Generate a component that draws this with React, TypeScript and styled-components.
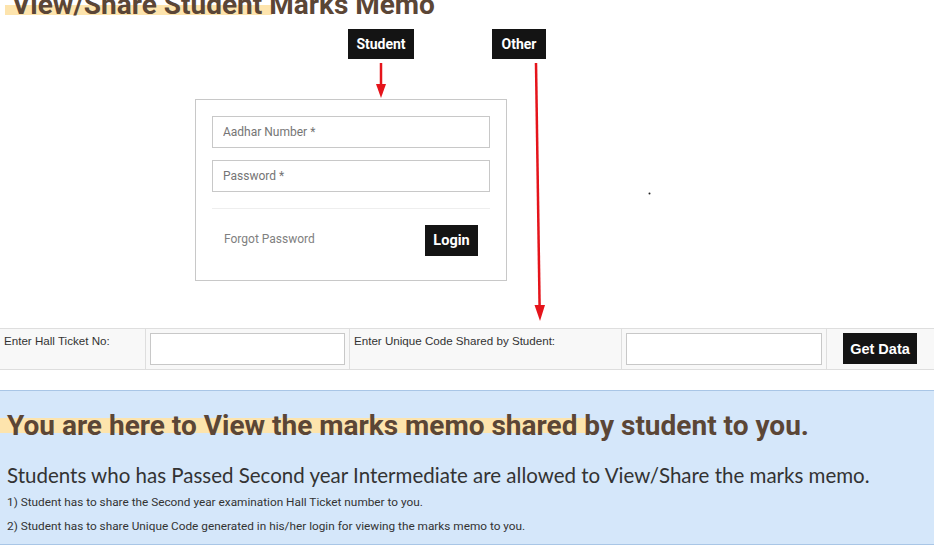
import React from "react";
import styled, { createGlobalStyle } from "styled-components";

const GlobalStyle = createGlobalStyle`
  html, body {
    margin: 0;
    padding: 0;
    background: #fff;
    overflow: hidden;
  }
  * {
    box-sizing: border-box;
  }
`;

const palette = {
  brown: "#5b4636",
  highlight: "#fde4ad",
  red: "#e5141b",
  black: "#141414",
  gray_cc: "#c8c8c8",
  gray_dd: "#dedede",
  gray_88: "#8a8a8a",
  blue_bg: "#d5e7fa",
  blue_line: "#a9c6e6",
};

const Page = styled.div`
  position: relative;
  width: 934px;
  height: 547px;
  overflow: hidden;
  font-family: Roboto, "Liberation Sans", sans-serif;
`;

const PageTitle = styled.h1`
  margin: -11px 0 0 0;
  padding-left: 12px;
  height: 31px;
  font-family: Roboto, "Liberation Sans", sans-serif;
  font-size: 28px;
  line-height: 31px;
  font-weight: 700;
  color: ${palette.brown};
  background-image: linear-gradient(${palette.highlight}, ${palette.highlight});
  background-repeat: no-repeat;
  background-size: 267px 10px;
  background-position: 5px 16px;
`;

const Stage = styled.div`
  padding-top: 9px;
`;

const TabLabels = styled.div`
  display: flex;
  gap: 78px;
  padding-left: 348px;
`;

const TabLabel = styled.div<{ width: number }>`
  width: ${({ width }) => width}px;
  height: 30px;
  background: ${palette.black};
  color: #fff;
  font-size: 14px;
  font-weight: 700;
  display: flex;
  align-items: center;
  justify-content: center;
`;

const LoginBox = styled.div`
  margin: 40px 0 0 195px;
  width: 312px;
  height: 182px;
  border: 1px solid ${palette.gray_cc};
  padding: 16px 16px 0 16px;
`;

const TextInput = styled.input`
  display: block;
  width: 100%;
  height: 32px;
  border: 1px solid ${palette.gray_cc};
  padding: 0 10px;
  font-family: Roboto, "Liberation Sans", sans-serif;
  font-size: 12px;
  color: #333;
  outline: none;
  & + & {
    margin-top: 12px;
  }
  ::placeholder {
    color: ${palette.gray_88};
  }
`;

const LoginFooter = styled.div`
  margin-top: 16px;
  border-top: 1px solid #eeeeee;
  padding: 16px 12px 0 12px;
  display: flex;
  align-items: center;
  justify-content: space-between;
  span {
    font-size: 12px;
    color: #808080;
    margin-bottom: 3px;
  }
`;

const DarkButton = styled.button<{ w: number }>`
  width: ${({ w }) => w}px;
  height: 31px;
  border: none;
  padding: 0;
  background: ${palette.black};
  color: #fff;
  font-family: ${({ w }) =>
    w > 60 ? `"Liberation Sans", Arial, sans-serif` : `Roboto, "Liberation Sans", sans-serif`};
  font-size: 14.5px;
  font-weight: 700;
  cursor: pointer;
`;

const TicketRow = styled.div`
  margin-top: 47px;
  display: grid;
  grid-template-columns: 145px 204px 272px 205px 1fr;
  border-top: 1px solid ${palette.gray_dd};
  border-bottom: 1px solid ${palette.gray_dd};
  background: #f8f8f8;
  height: 42px;
`;

const Cell = styled.div`
  padding: 4px;
  border-left: 1px solid ${palette.gray_dd};
  &:first-child {
    border-left: none;
  }
`;

const CellLabel = styled(Cell)`
  padding: 5px 4px;
  font-family: "Liberation Sans", Arial, sans-serif;
  font-size: 11.6px;
  color: #333;
`;

const PlainInput = styled.input`
  width: 100%;
  height: 32px;
  background: #fff;
  border: 1px solid ${palette.gray_cc};
  outline: none;
`;

const ButtonCell = styled(Cell)`
  padding-left: 16px;
`;

const InfoPanel = styled.section`
  margin-top: 20px;
  height: 155px;
  background: ${palette.blue_bg};
  border-top: 1px solid ${palette.blue_line};
  border-bottom: 1px solid ${palette.blue_line};
  padding: 17px 7px 0 7px;
`;

const InfoHeading = styled.h2`
  margin: 0 -7px;
  padding-left: 7px;
  font-family: Roboto, "Liberation Sans", sans-serif;
  font-size: 28px;
  line-height: 36px;
  font-weight: 700;
  color: ${palette.brown};
  background-image: linear-gradient(${palette.highlight}, ${palette.highlight});
  background-repeat: no-repeat;
  background-size: 590px 15px;
  background-position: 0 10px;
`;

const InfoLead = styled.p`
  margin: 19px 0 3px 0;
  font-family: Lato, "Liberation Sans", sans-serif;
  font-size: 20.5px;
  line-height: 24px;
  font-weight: 400;
  color: #333;
`;

const InfoStep = styled.p`
  margin: 0;
  font-family: Roboto, "Liberation Sans", sans-serif;
  font-size: 11.8px;
  line-height: 24px;
  color: #333;
`;

const Arrows = styled.svg`
  position: absolute;
  left: 0;
  top: 0;
  pointer-events: none;
`;

const App: React.FC = () => {
  return (
    <Page>
      <GlobalStyle />
      <PageTitle>View/Share Student Marks Memo</PageTitle>

      <Stage>
        <TabLabels>
          <TabLabel width={66}>Student</TabLabel>
          <TabLabel width={54}>Other</TabLabel>
        </TabLabels>

        <LoginBox>
          <TextInput placeholder="Aadhar Number *" />
          <TextInput placeholder="Password *" type="password" />
          <LoginFooter>
            <span>Forgot Password</span>
            <DarkButton w={53}>Login</DarkButton>
          </LoginFooter>
        </LoginBox>
      </Stage>

      <TicketRow>
        <CellLabel>Enter Hall Ticket No:</CellLabel>
        <Cell>
          <PlainInput />
        </Cell>
        <CellLabel>Enter Unique Code Shared by Student:</CellLabel>
        <Cell>
          <PlainInput />
        </Cell>
        <ButtonCell>
          <DarkButton w={74}>Get Data</DarkButton>
        </ButtonCell>
      </TicketRow>

      <InfoPanel>
        <InfoHeading>You are here to View the marks memo shared by student to you.</InfoHeading>
        <InfoLead>
          Students who has Passed Second year Intermediate are allowed to View/Share the marks memo.
        </InfoLead>
        <InfoStep>1) Student has to share the Second year examination Hall Ticket number to you.</InfoStep>
        <InfoStep>
          2) Student has to share Unique Code generated in his/her login for viewing the marks memo to you.
        </InfoStep>
      </InfoPanel>

      {/* annotation arrows drawn over the page */}
      <Arrows width={934} height={547} viewBox="0 0 934 547">
        <line x1={381} y1={63} x2={381} y2={86} stroke={palette.red} strokeWidth={2.5} />
        <polygon points="376,84 386,84 381,98" fill={palette.red} />
        <line x1={536} y1={63} x2={539.6} y2={307} stroke={palette.red} strokeWidth={2.5} />
        <polygon points="534.5,305 545,305 540,321" fill={palette.red} />
        <circle cx={649.5} cy={193.5} r={1} fill="#222" />
      </Arrows>
    </Page>
  );
};

export default App;
